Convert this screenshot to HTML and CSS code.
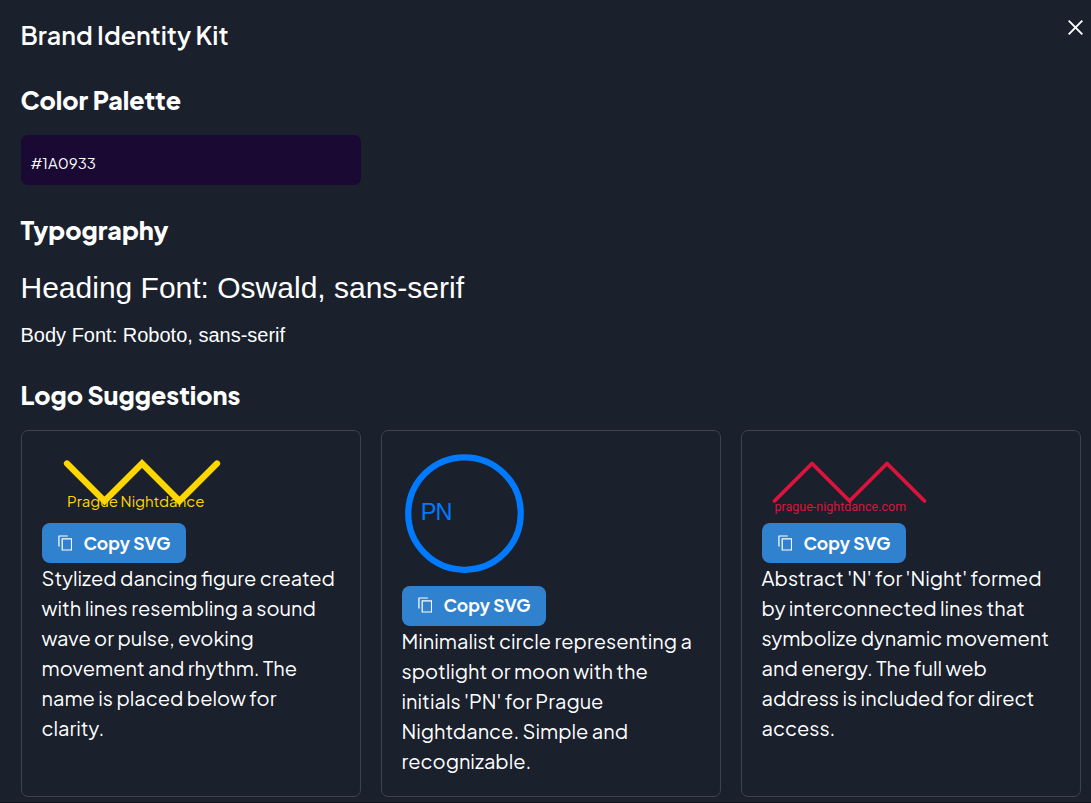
FILE: index.html
```html
<!DOCTYPE html>
<html lang="en">
<head>
    <meta charset="UTF-8">
    <meta name="viewport" content="width=device-width, initial-scale=1.0">
    <title>Brand Identity Kit</title>
    <link rel="stylesheet" href="styles.css">
</head>
<body>
    <div class="modal">
        <header class="modal-header">
            <h1>Brand Identity Kit</h1>
            <button class="btn-close" aria-label="Close">
                <svg width="15" height="15" viewBox="0 0 15 15">
                    <path d="M0.7 0.7L14.3 14.3M14.3 0.7L0.7 14.3" stroke="#fff" stroke-width="1.9" fill="none"/>
                </svg>
            </button>
        </header>

        <h2 class="title-palette">Color Palette</h2>
        <div class="grid">
            <div class="swatch">#1A0933</div>
        </div>

        <h2 class="title-typography">Typography</h2>
        <p class="heading-font">Heading Font: Oswald, sans-serif</p>
        <p class="body-font">Body Font: Roboto, sans-serif</p>

        <h2 class="title-logos">Logo Suggestions</h2>
        <div class="grid logos">
            <div class="card">
                <svg class="logo" width="250" height="62.5" viewBox="0 0 200 50">
                    <path d="M20 10L50 40L80 10L110 40L140 10" fill="none" stroke="#FFD700" stroke-width="5" stroke-linecap="round"/>
                    <text class="wave-text" x="20" y="45">Prague Nightdance</text>
                </svg>
                <button class="btn-copy">
                    <svg width="16" height="18" viewBox="0 0 16 18">
                        <path d="M1 12.7V1.5H10.5M4.5 4.5H14.5V16.5H4.5Z" fill="none" stroke="#fff" stroke-width="1.3" stroke-linejoin="round"/>
                    </svg>
                    <span>Copy SVG</span>
                </button>
                <p class="description">Stylized dancing figure created with lines resembling a sound wave or pulse, evoking movement and rhythm. The name is placed below for clarity.</p>
            </div>

            <div class="card">
                <svg class="logo" width="125" height="125" viewBox="0 0 100 100">
                    <circle cx="50" cy="50" r="45" fill="none" stroke="#007BFF" stroke-width="5"/>
                    <text class="circle-text" x="15" y="55">PN</text>
                </svg>
                <button class="btn-copy">
                    <svg width="16" height="18" viewBox="0 0 16 18">
                        <path d="M1 12.7V1.5H10.5M4.5 4.5H14.5V16.5H4.5Z" fill="none" stroke="#fff" stroke-width="1.3" stroke-linejoin="round"/>
                    </svg>
                    <span>Copy SVG</span>
                </button>
                <p class="description">Minimalist circle representing a spotlight or moon with the initials 'PN' for Prague Nightdance. Simple and recognizable.</p>
            </div>

            <div class="card">
                <svg class="logo" width="250" height="62.5" viewBox="0 0 200 50">
                    <path d="M10 40L40 10L70 40L100 10L130 40" fill="none" stroke="#DC143C" stroke-width="3" stroke-linecap="round" stroke-linejoin="round"/>
                    <text class="address-text" x="10" y="48">prague-nightdance.com</text>
                </svg>
                <button class="btn-copy">
                    <svg width="16" height="18" viewBox="0 0 16 18">
                        <path d="M1 12.7V1.5H10.5M4.5 4.5H14.5V16.5H4.5Z" fill="none" stroke="#fff" stroke-width="1.3" stroke-linejoin="round"/>
                    </svg>
                    <span>Copy SVG</span>
                </button>
                <p class="description">Abstract 'N' for 'Night' formed by interconnected lines that symbolize dynamic movement and energy. The full web address is included for direct access.</p>
            </div>
        </div>
    </div>
</body>
</html>
```
FILE: styles.css
```css
* {
    box-sizing: border-box;
}

body {
    margin: 0;
    height: 803px;
    overflow: hidden;
    background-color: #0f131d;
    color: #fff;
    font-family: "Plus Jakarta Sans", Inter, sans-serif;
    font-size: 20px;
    line-height: 30px;
}

.modal {
    height: 802px;
    padding: 19px 10px 0 20.5px;
    background-color: #1a202c;
}

.modal-header {
    display: flex;
    justify-content: space-between;
    height: 32px;
}

h1,
h2,
p {
    margin: 0;
}

h1 {
    font-size: 25px;
    font-weight: 600;
    line-height: 32px;
}

h2 {
    font-size: 25px;
    font-weight: 800;
    line-height: 30px;
}

.btn-close {
    display: flex;
    width: 15px;
    height: 15px;
    margin: 1px -2px 0 0;
    padding: 0;
    border: none;
    background: none;
    cursor: pointer;
}

.grid {
    display: grid;
    grid-template-columns: repeat(3, 340px);
    gap: 20px;
}

.title-palette {
    margin: 34px 0 20px;
}

.swatch {
    height: 50px;
    padding: 18px 10px 0;
    border-radius: 7px;
    background-color: #1a0933;
    font-size: 15px;
    line-height: 20px;
}

.title-typography {
    margin: 30px 0 20px;
}

.heading-font,
.body-font {
    font-family: "Liberation Sans", Arial, sans-serif;
}

.heading-font {
    font-size: 30px;
    line-height: 45px;
}

.body-font {
    margin-top: 10px;
}

.title-logos {
    margin: 30px 0 20px;
}

.card {
    height: 367px;
    padding: 20px;
    border: 1px solid #3e424d;
    border-radius: 7px;
}

.logo {
    display: block;
    margin-bottom: 9.8px;
}

.wave-text {
    font-size: 12px;
    fill: #ffd700;
}

.circle-text {
    font-family: "Liberation Sans", Arial, sans-serif;
    font-size: 18.8px;
    letter-spacing: -0.8px;
    fill: #007bff;
}

.address-text {
    font-family: Roboto, sans-serif;
    font-size: 10px;
    fill: #dc143c;
}

.btn-copy {
    display: flex;
    align-items: center;
    gap: 11px;
    width: 144px;
    height: 40px;
    padding: 0 15px 1px 16px;
    border: none;
    border-radius: 8px;
    background-color: #3182ce;
    color: #fff;
    font-family: inherit;
    font-size: 17.5px;
    font-weight: 700;
    white-space: nowrap;
    cursor: pointer;
}

.description {
    font-weight: 400;
}
```
